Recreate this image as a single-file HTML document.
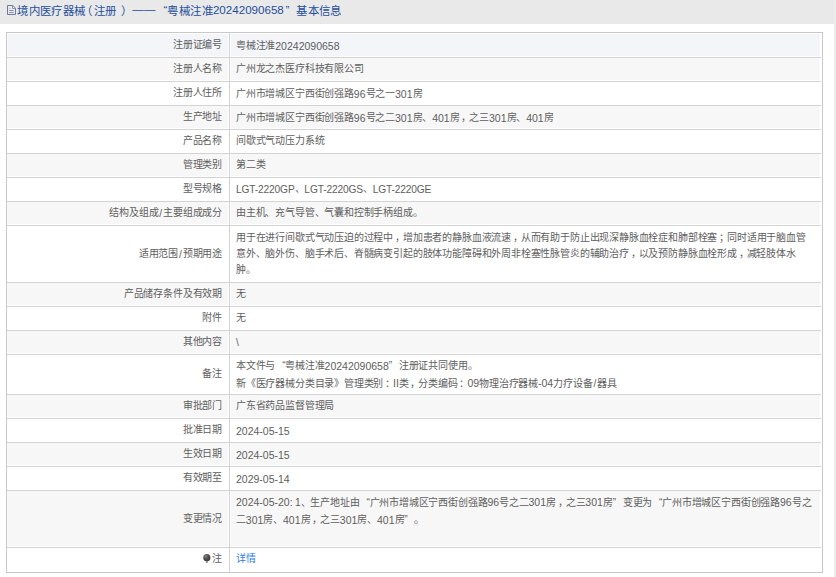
<!DOCTYPE html>
<html lang="zh-CN">
<head>
<meta charset="utf-8">
<style>
html,body{margin:0;padding:0;width:836px;height:577px;overflow:hidden;background:#fff;}
body{font-family:"Liberation Sans",sans-serif;position:relative;}
i{font-style:normal;}
b{font-weight:normal;}
.hdr{position:absolute;left:0;top:0;width:834px;height:24px;background:#e9e9e9;}
.rstrip{position:absolute;left:834px;top:0;width:2px;height:577px;background:#ececec;}
.hicon{position:absolute;left:7px;top:5px;width:9px;height:10px;}
.hicon svg{display:block;}
.htxt{position:absolute;left:18px;top:1px;font-size:11.43px;letter-spacing:0.4px;line-height:20px;color:#1f4f9c;white-space:nowrap;}
.htxt .a{font-size:11.6px;letter-spacing:0;}
.row{position:absolute;left:6px;width:816px;}
.bt{position:absolute;left:1px;top:0;width:814px;height:1px;background:#d3d3d3;}
.bgl{position:absolute;left:1px;top:1px;width:222px;box-shadow:inset 1px 0 rgba(255,255,255,.55),inset -1px -1px rgba(255,255,255,.8);}
.bgr{position:absolute;left:224px;top:1px;width:591px;box-shadow:inset 1px 0 rgba(255,255,255,.55),inset -1px -1px rgba(255,255,255,.8);}
.lab,.val{position:absolute;top:1px;display:flex;align-items:center;font-size:10px;letter-spacing:-0.18px;line-height:16.33px;color:#5e5e5e;white-space:nowrap;}
.lab{left:0;width:216px;justify-content:flex-end;}
.val{left:230px;width:585px;}
.lab .a,.val .a{font-size:10.2px;letter-spacing:0;position:relative;top:0.8px;}
.lab .d,.val .d{font-size:10.5px;letter-spacing:0;}
.val b.a:not(.d){letter-spacing:-0.15px;}
.vsep{position:absolute;left:229px;top:33px;width:1px;height:539px;background:#d3d3d3;}
.frame{position:absolute;left:6px;top:32px;width:815px;height:539px;border:1px solid #c8c8c8;}
.lnk{color:#2f80e6;}
.bulb{position:absolute;left:197px;top:6px;}
.ql{display:inline-block;width:1em;text-align:right;}
.qr{display:inline-block;width:1em;text-align:left;}
.pc{position:relative;left:0.18em;}
.pl{position:relative;left:-0.3em;}
.pr{position:relative;left:0.3em;}
.r2{letter-spacing:-4.5px;position:relative;left:-2px;}
b.sl{padding:0 0.9px;}
</style>
</head>
<body>
<div class="hdr"></div>
<div class="rstrip"></div>
<div class="hicon"><svg width="9" height="10" viewBox="0 0 9 10"><path d="M0.5 0.5H5.8L8.5 3.2V9.5H0.5Z" fill="none" stroke="#7276a2" stroke-width="1"/><path d="M5.5 0.5V3.5H8.5" fill="none" stroke="#8a8db4" stroke-width="0.9"/><path d="M2.3 5.5H6.6M2.3 7.5H6.6" stroke="#8084ae" stroke-width="0.9"/><path d="M2.3 3.5H3.4" stroke="#a0a3c4" stroke-width="0.8"/></svg></div>
<div class="htxt" style="left:17.3px;top:1px">境内医疗器械</div>
<div class="htxt" style="left:80.5px;top:1px"><i >（</i></div>
<div class="htxt" style="left:94px;top:1px">注册</div>
<div class="htxt" style="left:121px;top:1px"><i >）</i></div>
<div class="htxt" style="left:132.2px;top:-1px">——</div>
<div class="htxt" style="left:163.5px;top:0px"><i >“</i></div>
<div class="htxt" style="left:167.4px;top:1px">粤械注准</div>
<div class="htxt" style="left:212.9px;top:0px"><b class="a d">20242090658</b></div>
<div class="htxt" style="left:285.5px;top:0px"><i >”</i></div>
<div class="htxt" style="left:296.3px;top:1px">基本信息</div>
<div class="row" style="top:33px;height:24px"><div class="bgl" style="height:23px;background:#f3f5f9"></div><div class="bgr" style="height:23px;background:#f3f5f9"></div><div class="lab" style="height:23px"><span>注册证编号</span></div><div class="val" style="height:23px"><span>粤械注准<b class="a d">20242090658</b></span></div></div>
<div class="row" style="top:57px;height:24px"><div class="bt"></div><div class="bgl" style="height:23px;background:#f7f7f7"></div><div class="bgr" style="height:23px;background:#f7f7f7"></div><div class="lab" style="height:23px"><span>注册人名称</span></div><div class="val" style="height:23px"><span>广州龙之杰医疗科技有限公司</span></div></div>
<div class="row" style="top:81px;height:24px"><div class="bt"></div><div class="lab" style="height:23px"><span>注册人住所</span></div><div class="val" style="height:23px"><span>广州市增城区宁西街创强路<b class="a d">96</b>号之一<b class="a d">301</b>房</span></div></div>
<div class="row" style="top:105px;height:24px"><div class="bt"></div><div class="bgl" style="height:23px;background:#f7f7f7"></div><div class="bgr" style="height:23px;background:#f7f7f7"></div><div class="lab" style="height:23px"><span>生产地址</span></div><div class="val" style="height:23px"><span>广州市增城区宁西街创强路<b class="a d">96</b>号之二<b class="a d">301</b>房、<b class="a d">401</b>房<i class="pc">，</i>之三<b class="a d">301</b>房、<b class="a d">401</b>房</span></div></div>
<div class="row" style="top:129px;height:24px"><div class="bt"></div><div class="lab" style="height:23px"><span>产品名称</span></div><div class="val" style="height:23px"><span>间歇式气动压力系统</span></div></div>
<div class="row" style="top:153px;height:24px"><div class="bt"></div><div class="bgl" style="height:23px;background:#f7f7f7"></div><div class="bgr" style="height:23px;background:#f7f7f7"></div><div class="lab" style="height:23px"><span>管理类别</span></div><div class="val" style="height:23px"><span>第二类</span></div></div>
<div class="row" style="top:177px;height:24px"><div class="bt"></div><div class="lab" style="height:23px"><span>型号规格</span></div><div class="val" style="height:23px"><span><b class="a">LGT-2220GP</b>、<b class="a">LGT-2220GS</b>、<b class="a">LGT-2220GE</b></span></div></div>
<div class="row" style="top:201px;height:24px"><div class="bt"></div><div class="bgl" style="height:23px;background:#f7f7f7"></div><div class="bgr" style="height:23px;background:#f7f7f7"></div><div class="lab" style="height:23px"><span>结构及组成<b class="a sl">/</b>主要组成成分</span></div><div class="val" style="height:23px"><span>由主机、充气导管、气囊和控制手柄组成。</span></div></div>
<div class="row" style="top:225px;height:57px"><div class="bt"></div><div class="lab" style="height:56px"><span>适用范围<b class="a sl">/</b>预期用途</span></div><div class="val" style="height:56px"><span>用于在进行间歇式气动压迫的过程中<i class="pc">，</i>增加患者的静脉血液流速<i class="pc">，</i>从而有助于防止出现深静脉血栓症和肺部栓塞<i class="pc">；</i>同时适用于脑血管<br>意外、脑外伤、脑手术后、脊髓病变引起的肢体功能障碍和外周非栓塞性脉管炎的辅助治疗<i class="pc">，</i>以及预防静脉血栓形成<i class="pc">，</i>减轻肢体水<br>肿。</span></div></div>
<div class="row" style="top:282px;height:24px"><div class="bt"></div><div class="bgl" style="height:23px;background:#f7f7f7"></div><div class="bgr" style="height:23px;background:#f7f7f7"></div><div class="lab" style="height:23px"><span>产品储存条件及有效期</span></div><div class="val" style="height:23px"><span>无</span></div></div>
<div class="row" style="top:306px;height:24px"><div class="bt"></div><div class="lab" style="height:23px"><span>附件</span></div><div class="val" style="height:23px"><span>无</span></div></div>
<div class="row" style="top:330px;height:24px"><div class="bt"></div><div class="bgl" style="height:23px;background:#f7f7f7"></div><div class="bgr" style="height:23px;background:#f7f7f7"></div><div class="lab" style="height:23px"><span>其他内容</span></div><div class="val" style="height:23px"><span><b class="a">\</b></span></div></div>
<div class="row" style="top:354px;height:40px"><div class="bt"></div><div class="lab" style="height:39px"><span>备注</span></div><div class="val" style="height:39px"><span>本文件与<i class="ql">“</i>粤械注准<b class="a d">20242090658</b><i class="qr">”</i>注册证共同使用。<br>新《医疗器械分类目录》管理类别<i class="pc">：</i><i class="r2">Ⅱ</i>类<i class="pc">，</i>分类编码<i class="pc">：</i><b class="a d">09</b>物理治疗器械<b class="a d">-04</b>力疗设备<b class="a sl">/</b>器具</span></div></div>
<div class="row" style="top:394px;height:24px"><div class="bt"></div><div class="bgl" style="height:23px;background:#f7f7f7"></div><div class="bgr" style="height:23px;background:#f7f7f7"></div><div class="lab" style="height:23px"><span>审批部门</span></div><div class="val" style="height:23px"><span>广东省药品监督管理局</span></div></div>
<div class="row" style="top:418px;height:24px"><div class="bt"></div><div class="lab" style="height:23px"><span>批准日期</span></div><div class="val" style="height:23px"><span><b class="a d">2024-05-15</b></span></div></div>
<div class="row" style="top:442px;height:24px"><div class="bt"></div><div class="bgl" style="height:23px;background:#f7f7f7"></div><div class="bgr" style="height:23px;background:#f7f7f7"></div><div class="lab" style="height:23px"><span>生效日期</span></div><div class="val" style="height:23px"><span><b class="a d">2024-05-15</b></span></div></div>
<div class="row" style="top:466px;height:24px"><div class="bt"></div><div class="lab" style="height:23px"><span>有效期至</span></div><div class="val" style="height:23px"><span><b class="a d">2029-05-14</b></span></div></div>
<div class="row" style="top:490px;height:57px"><div class="bt"></div><div class="bgl" style="height:56px;background:#f7f7f7"></div><div class="bgr" style="height:56px;background:#f7f7f7"></div><div class="lab" style="height:56px"><span>变更情况</span></div><div class="val" style="height:56px"><span><b class="a d">2024-05-20</b><b class="a">: 1</b>、生产地址由<i class="ql">“</i>广州市增城区宁西街创强路<b class="a d">96</b>号之二<b class="a d">301</b>房<i class="pc">，</i>之三<b class="a d">301</b>房<i class="qr">”</i>变更为<i class="ql">“</i>广州市增城区宁西街创强路<b class="a d">96</b>号之<br>二<b class="a d">301</b>房、<b class="a d">401</b>房<i class="pc">，</i>之三<b class="a d">301</b>房、<b class="a d">401</b>房<i class="qr">”</i>。<br>&nbsp;</span></div></div>
<div class="row" style="top:547px;height:25px"><div class="bt"></div><div class="lab" style="height:23px"><span><svg class="bulb" width="8" height="10" viewBox="0 0 8 10"><defs><radialGradient id="bg" cx="0.35" cy="0.3" r="0.7"><stop offset="0" stop-color="#8a8a8a"/><stop offset="0.45" stop-color="#555"/><stop offset="1" stop-color="#3c3c3c"/></radialGradient></defs><circle cx="3.8" cy="3.7" r="3.6" fill="url(#bg)"/><rect x="2.8" y="7.2" width="2" height="1.6" fill="#777"/></svg>注</span></div><div class="val" style="height:23px"><span><span class="lnk">详情</span></span></div></div>
<div class="vsep"></div>
<div class="frame"></div>
</body>
</html>
